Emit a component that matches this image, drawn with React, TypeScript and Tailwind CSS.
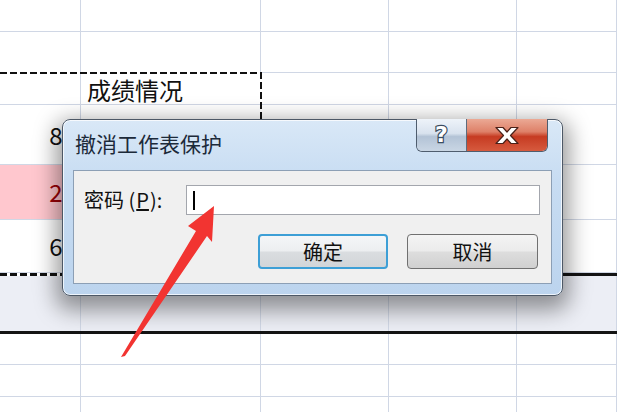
import React from "react";

const COLS = [81, 180, 128, 128, 100];

type Cell = { text?: string; className?: string };

const Row = ({ h, cells = [], className = "" }: { h: string; cells?: Cell[]; className?: string }) => (
  <div className={`flex box-border border-b border-[#d0d7e5] ${h} ${className}`}>
    {COLS.map((w, i) => (
      <div
        key={i}
        style={{ width: w }}
        className={`shrink-0 box-border border-r border-[#d0d7e5] flex items-center whitespace-nowrap ${cells[i]?.className ?? ""}`}
      >
        {cells[i]?.text}
      </div>
    ))}
  </div>
);

const dashH = "bg-[repeating-linear-gradient(90deg,#111_0_7px,#fff_7px_10px)]";
const dashV = "bg-[repeating-linear-gradient(180deg,#111_0_7px,#fff_7px_10px)]";

const Dialog = () => (
  <div className="absolute left-[62px] top-[119px] w-[501px] h-[177px] flex flex-col rounded-[8px] border border-[#4d5866] bg-[linear-gradient(180deg,#d9e8f7_0%,#c7dcf2_35%,#bcd4ee_100%)] shadow-[0_8px_22px_6px_rgba(0,0,0,0.4),inset_0_0_0_1px_rgba(255,255,255,0.75)]">
    {/* title bar */}
    <div className="flex items-start justify-between h-[50px] pl-[12px] pr-[14px]">
      <span className="mt-[9px] text-[21px] leading-[28px] text-[#1c2a3a]">撤消工作表保护</span>
      <div className="flex h-[33px] -mt-px rounded-b-[6px] overflow-hidden border border-t-0 border-[#4f5d6e]">
        <div className="w-[50px] flex items-center justify-center border-r border-[#5d6b7c] bg-[linear-gradient(180deg,#eef3f9_0%,#d8e2ee_45%,#b3c3d6_55%,#c9d6e4_100%)]">
          <span className="text-[22px] font-bold leading-none text-white font-['DejaVu_Sans',sans-serif] [-webkit-text-stroke:2.4px_#3a4c60] [paint-order:stroke_fill]">?</span>
        </div>
        <div className="w-[80px] flex items-center justify-center bg-[linear-gradient(180deg,#eba995_0%,#de8068_40%,#c63b22_55%,#d65a3e_100%)]">
          <svg width="28" height="19" viewBox="0 0 28 19">
            <path
              d="M3 1.5h7l4 4.5 4-4.5h7l-7.5 8 7.5 8h-7l-4-4.5-4 4.5H3l7.5-8z"
              fill="#fff"
              stroke="#4a2018"
              strokeWidth="1.2"
              strokeLinejoin="round"
            />
          </svg>
        </div>
      </div>
    </div>
    {/* content panel */}
    <div className="flex-1 mx-[10px] mb-[11px] flex flex-col bg-[#f0f0f0] border border-[#8c9fb5]">
      <div className="flex items-center mt-[14px] pl-[10px] pr-[11px]">
        <span className="w-[102px] shrink-0 text-[20px] leading-[28px] text-[#111]">
          密码 (<span className="underline mx-[1px]">P</span>):
        </span>
        <div className="flex-1 h-[30px] flex items-center bg-white border border-[#a3a6ad]">
          <div className="ml-[6px] w-[2px] h-[19px] bg-black" />
        </div>
      </div>
      <div className="flex justify-end gap-[19px] mt-[19px] pr-[13px]">
        <div className="w-[130px] h-[35px] flex items-center justify-center rounded-[4px] border-2 border-[#3d9fd6] bg-[linear-gradient(180deg,#f4f6f8_0%,#eceef0_48%,#dadde0_52%,#d2d5d8_100%)] text-[20px] leading-none text-[#111]">
          确定
        </div>
        <div className="w-[131px] h-[35px] flex items-center justify-center rounded-[4px] border border-[#707070] bg-[linear-gradient(180deg,#f4f4f4_0%,#ebebeb_48%,#dddddd_52%,#d0d0d0_100%)] text-[20px] leading-none text-[#111]">
          取消
        </div>
      </div>
    </div>
  </div>
);

export default function App() {
  return (
    <div className="relative w-[617px] h-[412px] overflow-hidden bg-white font-['Noto_Sans_CJK_SC',sans-serif]">
      {/* worksheet */}
      <div className="flex flex-col">
        <Row h="h-[32px]" />
        <Row h="h-[41px]" />
        <Row
          h="h-[32px]"
          cells={[{}, { text: "成绩情况", className: "pl-[6px] pt-[2px] text-[24px] leading-[28px] text-[#111]" }]}
        />
        <Row h="h-[60px]" cells={[{ text: "85", className: "justify-end pr-[4px] text-[24px] text-[#111]" }]} />
        <Row
          h="h-[55px]"
          cells={[{ text: "23", className: "justify-end pr-[4px] text-[24px] text-[#9c0006] bg-[#ffc7ce]" }, { className: "bg-[#ffc7ce]" }]}
        />
        <Row h="h-[53px]" cells={[{ text: "67", className: "justify-end pr-[4px] text-[24px] text-[#111]" }]} />
        <div className="h-[61px] box-border border-y-[3px] border-[#141414] bg-[#eceef5] flex">
          {COLS.map((w, i) => (
            <div key={i} style={{ width: w }} className="shrink-0 box-border border-r border-[#d0d7e5]" />
          ))}
        </div>
        <Row h="h-[31px]" />
        <Row h="h-[32px]" />
        <Row h="h-[32px]" />
      </div>

      {/* copy marquee */}
      <div className="absolute left-[-10px] top-[72px] w-[272px] h-[204px]">
        <div className={`absolute left-0 top-0 w-full h-[2px] ${dashH}`} />
        <div className={`absolute right-0 top-0 w-[2px] h-full ${dashV}`} />
        <div className={`absolute left-0 bottom-0 w-full h-[3px] ${dashH}`} />
      </div>

      <Dialog />

      {/* red arrow */}
      <svg className="absolute inset-0 pointer-events-none" width="617" height="412" viewBox="0 0 617 412">
        <path
          d="M214 206 L188 226 L196 231 L121 357 L125 356 L207 236 L212 242 Z"
          fill="#f23431"
        />
      </svg>
    </div>
  );
}
